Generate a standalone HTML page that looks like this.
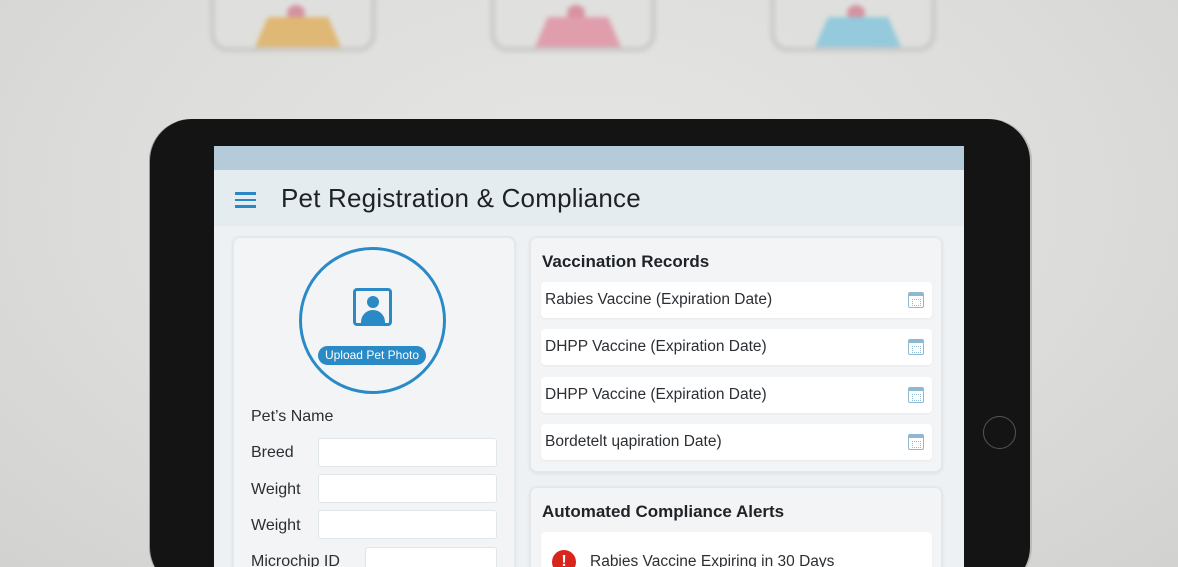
<!DOCTYPE html>
<html style="width:1178px;height:567px;overflow:hidden"><head><style>
*{margin:0;padding:0;box-sizing:border-box}
body{width:1178px;height:567px;overflow:hidden;position:relative;font-family:"Liberation Sans",sans-serif;background:radial-gradient(ellipse at 50% 35%,#e6e6e4 0%,#dcdcda 60%,#d2d2d0 100%)}
.pet{position:absolute;top:-40px;width:166px;height:92px;border-radius:18px;border:5px solid #c9c9c7;background:#e0e0de;filter:blur(2.5px);overflow:hidden;opacity:.9}
.pet .b{position:absolute;left:40px;bottom:0;width:86px;height:30px;clip-path:polygon(15% 0,85% 0,100% 100%,0 100%)}
.pet .t{position:absolute;left:72px;top:40px;width:18px;height:16px;border-radius:50%;background:#d58a9a}
.tab{position:absolute;left:150px;top:119px;width:880px;height:470px;background:#141414;border-radius:42px;box-shadow:2px 0 0 #bbb,-1px 0 0 #999}
.scr{position:absolute;left:214px;top:146px;width:750px;height:430px;background:#eef1f3}
.top{height:24px;background:#b5cbd9}
.hdr{height:56px;background:#e5ecf0;position:relative}
.hdr h1{position:absolute;left:67px;top:13px;font-size:26px;font-weight:normal;color:#1e2226;letter-spacing:.2px}
.ham{position:absolute;left:21px;top:22px;width:21px}
.ham i{display:block;height:2.5px;background:#2a86c4;margin-bottom:4px}
.card{position:absolute;background:#f2f4f6;border:2px solid #e2e8ec;border-radius:8px;box-shadow:0 1px 3px rgba(0,0,0,.06)}
.lbl{position:absolute;font-size:16px;color:#2b2f33}
.inp{position:absolute;background:#fff;border:1px solid #dfe6ea;border-radius:3px;height:29px}
.row{position:absolute;left:10px;width:391px;height:36px;background:#fff;border-radius:4px;font-size:15.5px;color:#2b2f33;padding:9px 0 0 4px;box-shadow:0 1px 2px rgba(0,0,0,.05)}
.cal{position:absolute;right:8px;top:10px;width:16px;height:16px;border:1.5px solid #8fb9d2;border-top-width:4px;border-radius:2px}
.cal:after{content:"";position:absolute;left:3px;top:3px;width:7px;height:5px;border:1px dotted #8fb9d2}
h2{position:absolute;font-size:17px;color:#1f2327}
</style></head><body>
<div class="pet" style="left:210px"><div class="t"></div><div class="b" style="background:#e0b46a"></div></div>
<div class="pet" style="left:490px"><div class="t"></div><div class="b" style="background:#e097a8"></div></div>
<div class="pet" style="left:770px"><div class="t"></div><div class="b" style="background:#8cc8dc"></div></div>
<div class="tab"></div>
<div style="position:absolute;left:983px;top:416px;width:33px;height:33px;border-radius:50%;border:1.5px solid #555"></div>
<div class="scr">
<div class="top"></div>
<div class="hdr"><div class="ham"><i></i><i></i><i></i></div><h1>Pet Registration &amp; Compliance</h1></div>
</div>
<div class="card" style="left:232px;top:236px;width:284px;height:340px"></div>
<div style="position:absolute;left:299px;top:247px;width:147px;height:147px;border-radius:50%;border:3px solid #2a8ac6"></div>
<div style="position:absolute;left:353px;top:288px;width:39px;height:38px;border:3px solid #2a8ac6;border-radius:4px;overflow:hidden">
<div style="position:absolute;left:11px;top:5px;width:12px;height:12px;border-radius:50%;background:#2a8ac6"></div>
<div style="position:absolute;left:5px;top:19px;width:24px;height:16px;border-radius:12px 12px 0 0;background:#2a8ac6"></div></div>
<div style="position:absolute;left:318px;top:346px;width:108px;height:19px;border-radius:10px;background:#2a8ac6;color:#fff;font-size:12px;text-align:center;line-height:19px">Upload Pet Photo</div>
<div class="lbl" style="left:251px;top:408px">Pet’s Name</div>
<div class="lbl" style="left:251px;top:444px">Breed</div>
<div class="lbl" style="left:251px;top:481px">Weight</div>
<div class="lbl" style="left:251px;top:517px">Weight</div>
<div class="lbl" style="left:251px;top:553px">Microchip ID</div>
<div class="inp" style="left:318px;top:438px;width:179px"></div>
<div class="inp" style="left:318px;top:474px;width:179px"></div>
<div class="inp" style="left:318px;top:510px;width:179px"></div>
<div class="inp" style="left:365px;top:547px;width:132px"></div>
<div class="card" style="left:529px;top:236px;width:414px;height:237px">
<h2 style="left:11px;top:14px">Vaccination Records</h2>
<div class="row" style="top:44px">Rabies Vaccine (Expiration Date)<span class="cal"></span></div>
<div class="row" style="top:91px">DHPP Vaccine (Expiration Date)<span class="cal"></span></div>
<div class="row" style="top:139px">DHPP Vaccine (Expiration Date)<span class="cal"></span></div>
<div class="row" style="top:186px">Bordetelt ɥapiration Date)<span class="cal"></span></div>
</div>
<div class="card" style="left:529px;top:486px;width:414px;height:100px">
<h2 style="left:11px;top:14px">Automated Compliance Alerts</h2>
<div class="row" style="top:44px;height:60px;padding:21px 0 0 49px">Rabies Vaccine Expiring in 30 Days
<span style="position:absolute;left:11px;top:18px;width:24px;height:24px;border-radius:50%;background:#d9261c;color:#fff;font-weight:bold;text-align:center;line-height:24px;font-size:16px">!</span></div>
</div>
</body></html>
